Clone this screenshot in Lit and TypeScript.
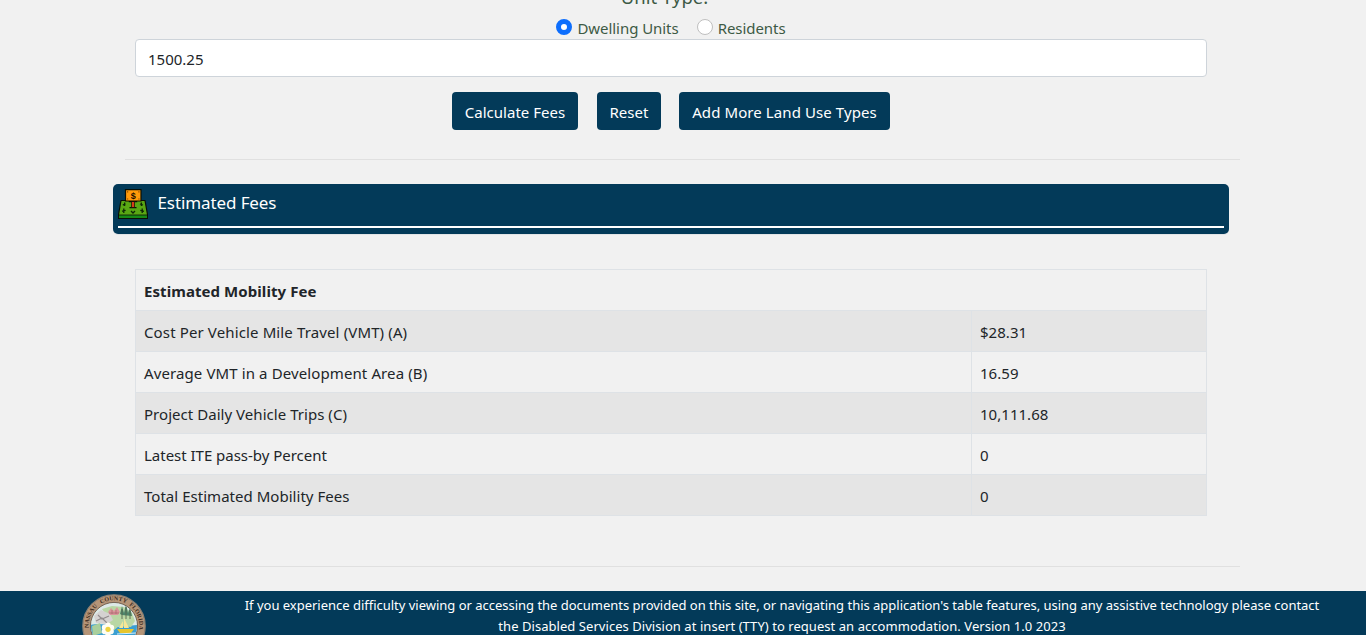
import { LitElement, html, css } from "lit";
import { customElement, state } from "lit/decorators.js";

interface FeeRow {
  label: string;
  value: string;
  fit?: string;
}

const FEES: FeeRow[] = [
  { label: "Cost Per Vehicle Mile Travel (VMT) (A)", value: "$28.31", fit: "wide" },
  { label: "Average VMT in a Development Area (B)", value: "16.59", fit: "mid" },
  { label: "Project Daily Vehicle Trips (C)", value: "10,111.68", fit: "loose" },
  { label: "Latest ITE pass-by Percent", value: "0", fit: "tight" },
  { label: "Total Estimated Mobility Fees", value: "0" },
];

@customElement("money-icon")
export class MoneyIcon extends LitElement {
  static styles = css`
    :host { display: block; width: 30px; height: 30px; }
    svg { display: block; }
    .bill { font: 700 9px "Liberation Sans", sans-serif; }
  `;

  render() {
    return html`<svg width="30" height="30" viewBox="0 0 30 30" aria-hidden="true">
      <path d="M3 11.5H27L29.5 25.5V29.5H.5V25.5Z" fill="#59a713" stroke="#0a0f05" stroke-width="1.2" stroke-linejoin="round" />
      <path d="M1 26H29V29H1Z" fill="#178a16" />
      <path d="M.8 26H29.2" stroke="#0a0f05" stroke-width=".8" />
      <path d="M10.8 12.6H19.2M11.5 18.6H18.5" stroke="#0a0f05" stroke-width="1.2" />
      <path d="M13.6 12.5H16.4V18.5H13.6Z" fill="#e8401c" stroke="#0a0f05" stroke-width=".8" />
      <path d="M7.5 .6H23V12H7.5Z" fill="#ff9a0a" stroke="#0a0f05" stroke-width="1.2" />
      <path d="M9 2.2h1.2v1.2H9zM20.3 2.2h1.2v1.2h-1.2zM9 9.4h1.2v1.2H9zM20.3 9.4h1.2v1.2h-1.2z" fill="#8a4a00" />
      <text class="bill" x="15.2" y="9.6" text-anchor="middle" fill="#1a0d00">$</text>
      <path d="M6.6 13.5V17M4.8 15.8L7.5 15M5.8 19.5V24M4 22.2L7.6 21.3M23.4 13.5V17M22 15L25 16M24.2 19.5V24M22.3 21.3L26 22.3M13 22L15 24L17 22"
        fill="none" stroke="#0d2706" stroke-width="1.3" />
    </svg>`;
  }
}

@customElement("county-seal")
export class CountySeal extends LitElement {
  static styles = css`
    :host { display: block; width: 64px; height: 64px; }
    svg { display: block; }
    .ring { font: 700 6px "Liberation Serif", serif; }
  `;

  render() {
    return html`<svg width="64" height="64" viewBox="0 0 64 64" role="img">
      <defs>
        <path id="arc" d="M8.3 40A25.2 25.2 0 1 1 55.7 40" />
        <clipPath id="scene"><circle cx="32" cy="32" r="23" /></clipPath>
      </defs>
      <circle cx="32" cy="32" r="31.2" fill="#b59578" stroke="#8d8073" stroke-width="1.2" />
      <circle cx="32" cy="32" r="23.6" fill="#dce9e6" stroke="#6b5a4c" stroke-width=".9" />
      <g clip-path="url(#scene)">
        <path d="M8 31Q20 28 33 33L56 31V56H8Z" fill="#3b9fd2" />
        <path d="M20 15L30 12L42 13L50 19L53 27L49 33L37 32L31 37L25 35L26 24Z" fill="#b9d7a4" />
        <path d="M12 22L19 16L28 20L31 26L25 30L14 29Z" fill="#d5d2d1" />
        <path d="M16 21L20 25L27 22M14 27L20 24L25 29" fill="none" stroke="#928c8d" stroke-width="1.1" />
        <path d="M26 18L29 14L32 17L35 13L38 18L36 21H28Z" fill="#d9969a" />
        <path d="M27 19H37M30 16V20M34 16V20" stroke="#a8656b" stroke-width=".7" />
        <path d="M40 21L38 20L40 12L42 19L44 10L46 19L48 13L50 22Z" fill="#4e856b" />
        <path d="M40 15V25M44 13V25M48 16V25" stroke="#59664d" stroke-width=".9" />
        <path d="M42 34V24L47 34ZM41 34V27L37 34Z" fill="#f5e797" />
        <path d="M35 35H52L49 39H38Z" fill="#e7c52c" />
        <path d="M35 40L54 39" stroke="#d9f1fa" stroke-width="1" />
        <path d="M10 32L18 29L20 39L11 42Z" fill="#a9cf9c" />
      </g>
      <g fill="#fffdf3">
        <circle cx="26" cy="31.4" r="2.8" /><circle cx="29.3" cy="33.6" r="2.8" />
        <circle cx="29" cy="37.4" r="2.8" /><circle cx="26" cy="39.4" r="2.8" />
        <circle cx="22.6" cy="37.4" r="2.8" /><circle cx="22.6" cy="33.4" r="2.8" />
      </g>
      <circle cx="26" cy="35.3" r="2.6" fill="#efd23c" />
      <g class="ring" fill="#3d2c21" text-anchor="middle">
        <text><textPath href="#arc" startOffset="19%">NASSAU</textPath></text>
        <text><textPath href="#arc" startOffset="49.5%">COUNTY</textPath></text>
        <text><textPath href="#arc" startOffset="81%">FLORIDA</textPath></text>
      </g>
    </svg>`;
  }
}

@customElement("app-root")
export class AppRoot extends LitElement {
  @state() private unit = "dwelling";

  static styles = css`
    :host {
      display: flex;
      flex-direction: column;
      height: 635px;
      overflow: hidden;
      background: #f1f1f1;
      color: #212529;
      font: 15px/24px "Noto Sans", "Open Sans", sans-serif;
      letter-spacing: 0.03px;
    }
    * { box-sizing: border-box; }
    .form {
      width: 1072px;
      margin-left: 135px;
      display: flex;
      flex-direction: column;
      align-items: center;
      color: #3d5a45;
    }
    .legend {
      height: 16px;
      display: flex;
      align-items: flex-end;
      padding: 0 13px 5px 0;
      font-size: 18.5px;
      line-height: 28px;
    }
    .units { display: flex; height: 23px; line-height: 25px; letter-spacing: -0.05px; }
    .unit { display: flex; }
    .unit + .unit { margin-left: 18px; }
    .dot {
      width: 16px;
      height: 16px;
      margin: 3px 5px 0 0;
      border: 1px solid #bfbfbf;
      border-radius: 50%;
      background: #fff;
    }
    .dot.on { border: 5px solid #0d6efd; }
    .amount {
      width: 100%;
      height: 38px;
      padding: 7px 12px 5px;
      border: 1px solid #ced4da;
      border-radius: 4px;
      background: #fff;
      color: #212529;
      font: inherit;
      outline: 0;
    }
    .actions { display: flex; margin-top: 15px; }
    .button {
      height: 38px;
      padding: 8px 0 6px;
      border: 0;
      border-radius: 4px;
      background: #033a59;
      color: #fff;
      font: inherit;
      letter-spacing: inherit;
      text-align: center;
    }
    .calculate { width: 126px; }
    .reset { width: 64px; margin: 0 18px 0 19px; }
    .add { width: 211px; letter-spacing: 0.09px; }
    .rule { height: 1px; width: 1115px; margin-left: 125px; background: #e0e0e0; flex: none; }
    .first { margin-top: 29px; }
    .banner {
      flex: none;
      width: 1116px;
      height: 50px;
      margin: 24px 0 35px 113px;
      padding: 5px 5px 6px;
      border-radius: 5px;
      background: #033a59;
      box-shadow: 0 1px 0 #e2e4e6;
      color: #fff;
    }
    .heading { display: flex; height: 39px; border-bottom: 2px solid #fff; }
    .title { margin-left: 9.5px; font-size: 17px; line-height: 28px; letter-spacing: -0.1px; }
    .table {
      flex: none;
      width: 1072px;
      margin-left: 135px;
      border: 1px solid #dee2e6;
      border-top: 0;
    }
    .row { display: grid; grid-template-columns: 835px 1fr; height: 41px; border-top: 1px solid #dee2e6; }
    .row:nth-child(even) { background: #e5e5e5; }
    .cell { padding: 9px 8px 7px; }
    .cell + .cell { border-left: 1px solid #dee2e6; }
    .head { font-weight: 700; letter-spacing: 0.07px; }
    .wide { letter-spacing: 0.13px; }
    .mid { letter-spacing: 0.11px; }
    .loose { letter-spacing: 0.04px; }
    .tight { letter-spacing: -0.02px; }
    .last { margin-top: 50px; }
    .footer {
      flex: 1;
      min-height: 0;
      margin-top: 24px;
      display: flex;
      overflow: hidden;
      background: #033a59;
      color: #fff;
    }
    .seal { margin: 3px 0 0 82px; }
    .notice {
      width: 1076px;
      margin: 4px 0 0 98px;
      font-size: 13px;
      line-height: 21px;
      letter-spacing: -0.015px;
      text-align: center;
      white-space: nowrap;
    }
    .second { letter-spacing: 0.05px; }
  `;

  private option(id: string, label: string) {
    return html`<div class="unit" role="radio" aria-checked=${this.unit === id} @click=${() => (this.unit = id)}>
      <span class="dot ${this.unit === id ? "on" : ""}"></span><span>${label}</span>
    </div>`;
  }

  render() {
    return html`
      <div class="form">
        <div class="legend">Unit Type:</div>
        <div class="units">${this.option("dwelling", "Dwelling Units")}${this.option("residents", "Residents")}</div>
        <input class="amount" value="1500.25" />
        <div class="actions">
          <button class="button calculate">Calculate Fees</button>
          <button class="button reset">Reset</button>
          <button class="button add">Add More Land Use Types</button>
        </div>
      </div>
      <div class="rule first"></div>
      <div class="banner">
        <div class="heading"><money-icon></money-icon><span class="title">Estimated Fees</span></div>
      </div>
      <div class="table">
        <div class="row"><div class="cell head">Estimated Mobility Fee</div></div>
        ${FEES.map(
          (r) => html`<div class="row">
            <div class="cell ${r.fit ?? ""}">${r.label}</div>
            <div class="cell">${r.value}</div>
          </div>`
        )}
      </div>
      <div class="rule last"></div>
      <div class="footer">
        <county-seal class="seal"></county-seal>
        <div class="notice">
          <div>If you experience difficulty viewing or accessing the documents provided on this site, or navigating this application's table features, using any assistive technology please contact</div>
          <div class="second">the Disabled Services Division at insert (TTY) to request an accommodation. Version 1.0 2023</div>
        </div>
      </div>
    `;
  }
}
